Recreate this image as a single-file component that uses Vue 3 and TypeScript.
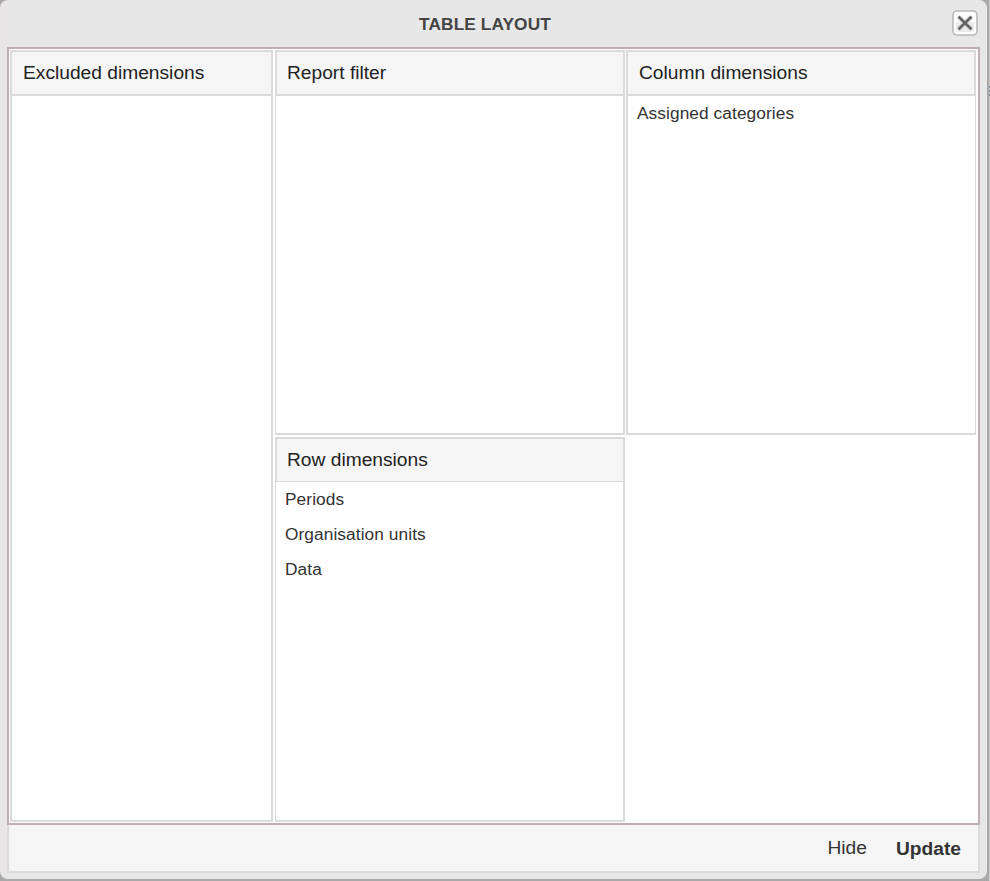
<script setup lang="ts">
interface Panel {
  id: string
  title: string
  items: string[]
}

const panels: Panel[] = [
  { id: 'excluded', title: 'Excluded dimensions', items: [] },
  { id: 'filter', title: 'Report filter', items: [] },
  { id: 'column', title: 'Column dimensions', items: ['Assigned categories'] },
  { id: 'row', title: 'Row dimensions', items: ['Periods', 'Organisation units', 'Data'] },
]
</script>

<template>
  <div class="page">
    <div class="dialog">
      <header class="titlebar">
        <h1>TABLE LAYOUT</h1>
        <button class="close" aria-label="Close">
          <svg viewBox="0 0 26 26" width="26" height="26">
            <rect x="1" y="1" width="24" height="24" rx="4" fill="#fdfdfd" stroke="#b9b9b9" stroke-width="1.6" />
            <rect x="4" y="12" width="18" height="10" fill="#ebebeb" />
            <path d="M6.5 6.7 L19.5 19.3 M19.5 6.7 L6.5 19.3" stroke="#c0c0c0" stroke-width="4" />
            <path d="M6.5 6.7 L19.5 19.3 M19.5 6.7 L6.5 19.3" stroke="#606060" stroke-width="2.3" />
          </svg>
        </button>
      </header>
      <main class="board">
        <section v-for="panel in panels" :key="panel.id" class="panel" :class="panel.id">
          <h2>{{ panel.title }}</h2>
          <ul>
            <li v-for="item in panel.items" :key="item">{{ item }}</li>
          </ul>
        </section>
      </main>
      <footer class="actions">
        <button class="hide">Hide</button>
        <button class="update">Update</button>
      </footer>
    </div>
  </div>
</template>

<style>
body {
  margin: 0;
  overflow: hidden;
}
</style>

<style scoped>
.page {
  box-sizing: border-box;
  position: relative;
  width: 990px;
  height: 881px;
  overflow: hidden;
  background: linear-gradient(90deg, #a9a9a9 989px, #c8c8c8 989px);
  font-family: "Liberation Sans", Arial, sans-serif;
  color: #333;
}
/* Sliver of the page content behind the dialog */
.page::after {
  content: "";
  position: absolute;
  top: 86px;
  right: 0;
  width: 1px;
  height: 10px;
  background: repeating-linear-gradient(#7c8790 0 2px, #c8c8c8 2px 4px);
}
.dialog {
  box-sizing: border-box;
  width: 987px;
  height: 879px;
  padding: 0 7px 6px;
  background: linear-gradient(90deg, #e8e5e6 7px, #e7e7e7 8px);
  border-radius: 8px;
}
.titlebar {
  display: flex;
  position: relative;
  width: 972px;
  height: 47px;
  justify-content: center;
}
h1 {
  margin: 0;
  padding-right: 16px;
  font-size: 17.3px;
  letter-spacing: 0.1px;
  line-height: 48px;
  color: #444;
}
button {
  padding: 0;
  border: 0;
  background: none;
  font-family: inherit;
  color: inherit;
}
.close {
  position: absolute;
  top: 10px;
  right: 1px;
  width: 26px;
  height: 26px;
}
.close svg {
  display: block;
}
.board {
  box-sizing: border-box;
  display: grid;
  width: 973px;
  height: 778px;
  padding: 1px 2px 1px 1px;
  grid-template-columns: 263px 350px 350px;
  grid-template-rows: 385px 385px;
  column-gap: 1px;
  row-gap: 2px;
  justify-content: end;
  border: 2px solid #bdb0b0;
  background: #fff;
}
.panel {
  box-sizing: border-box;
  border: 2px solid #dadada;
}
.excluded {
  grid-row: 1 / 3;
  margin-left: -1px;
  margin-right: 1px;
}
.filter,
.row {
  border-left-width: 1px;
}
.column {
  border-right-width: 1px;
}
.row {
  grid-column: 2;
}
h2 {
  box-sizing: border-box;
  height: 44px;
  margin: 0;
  padding-left: 11px;
  border-bottom: 2px solid #dadada;
  background: #f5f5f5;
  font-size: 19.2px;
  font-weight: 400;
  line-height: 41px;
  color: #222;
}
.filter h2,
.row h2 {
  padding-left: 10px;
  border-left: 1px solid #dadada;
}
.column h2 {
  border-right: 1px solid #dadada;
}
.row h2 {
  height: 43px;
  border-bottom-width: 1px;
}
ul {
  margin: 0;
  padding: 0 9px;
  list-style: none;
}
li {
  height: 35px;
  font-size: 17.3px;
  letter-spacing: 0.08px;
  line-height: 35px;
}
.actions {
  box-sizing: border-box;
  display: flex;
  width: 973px;
  height: 48px;
  padding-right: 17px;
  justify-content: flex-end;
  gap: 29px;
  border: solid #dadada;
  border-width: 0 2px 2px;
  background: #f5f5f5;
  font-size: 19.2px;
}
.actions button {
  font-size: inherit;
  line-height: 45px;
}
.actions .hide {
  padding-bottom: 1px;
}
.actions .update {
  padding-top: 1px;
  font-weight: 700;
}
</style>
